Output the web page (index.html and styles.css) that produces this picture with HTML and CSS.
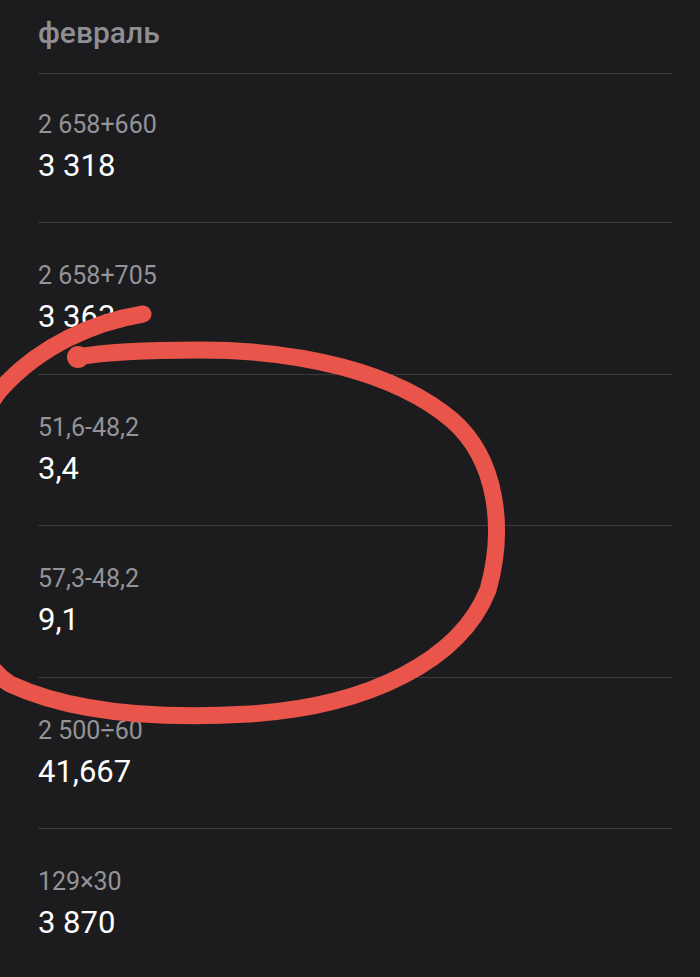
FILE: index.html
```html
<!DOCTYPE html>
<html lang="ru">
<head>
<meta charset="utf-8">
<title>февраль</title>
<link rel="stylesheet" href="styles.css">
</head>
<body>
<div class="screen">
  <div class="list">
    <div class="month">февраль</div>
    <div class="row row-first">
      <div class="expr">2 658+660</div>
      <div class="result">3 318</div>
    </div>
    <div class="row">
      <div class="expr">2 658+705</div>
      <div class="result">3 363</div>
    </div>
    <div class="row">
      <div class="expr">51,6-48,2</div>
      <div class="result">3,4</div>
    </div>
    <div class="row">
      <div class="expr">57,3-48,2</div>
      <div class="result">9,1</div>
    </div>
    <div class="row">
      <div class="expr">2 500÷60</div>
      <div class="result">41,667</div>
    </div>
    <div class="row">
      <div class="expr">129×30</div>
      <div class="result">3 870</div>
    </div>
  </div>
  <svg class="scribble" width="700" height="977" viewBox="0 0 700 977" aria-hidden="true">
    <path d="M143 314 C 95 322, 40 345, 0 390 C -50 450, -60 640, 10 684 C 70 712, 150 720, 250 714 C 370 706, 460 660, 488 590 C 505 530, 498 460, 452 420 C 395 372, 300 350, 200 350 C 140 350, 105 352, 78 357" />
    <circle cx="78" cy="357" r="11" />
  </svg>
</div>
</body>
</html>
```

FILE: styles.css
```css
html, body {
  margin: 0;
  padding: 0;
  background: #1c1c1e;
}

.screen {
  position: relative;
  width: 700px;
  height: 977px;
  overflow: hidden;
  background: #1c1c1e;
  font-family: Roboto, "Liberation Sans", sans-serif;
}

.list {
  padding: 0 28px 0 38px;
}

.month {
  font-size: 30px;
  line-height: 32px;
  font-weight: 500;
  color: #8e8e93;
  padding: 17px 0 24px;
  border-bottom: 1px solid #3a3a3c;
}

.row {
  padding: 38px 0 38.5px;
  border-bottom: 1px solid #3a3a3c;
}

.row-first {
  padding-top: 35.5px;
  padding-bottom: 38.5px;
}

.expr {
  font-size: 25px;
  line-height: 30px;
  color: #939398;
}

.result {
  margin-top: 8px;
  font-size: 31px;
  line-height: 36px;
  color: #ffffff;
}

.scribble {
  position: absolute;
  top: 0;
  left: 0;
  pointer-events: none;
}

.scribble path {
  fill: none;
  stroke: #e9554a;
  stroke-width: 17;
  stroke-linecap: round;
  stroke-linejoin: round;
}

.scribble circle {
  fill: #e9554a;
}
```
